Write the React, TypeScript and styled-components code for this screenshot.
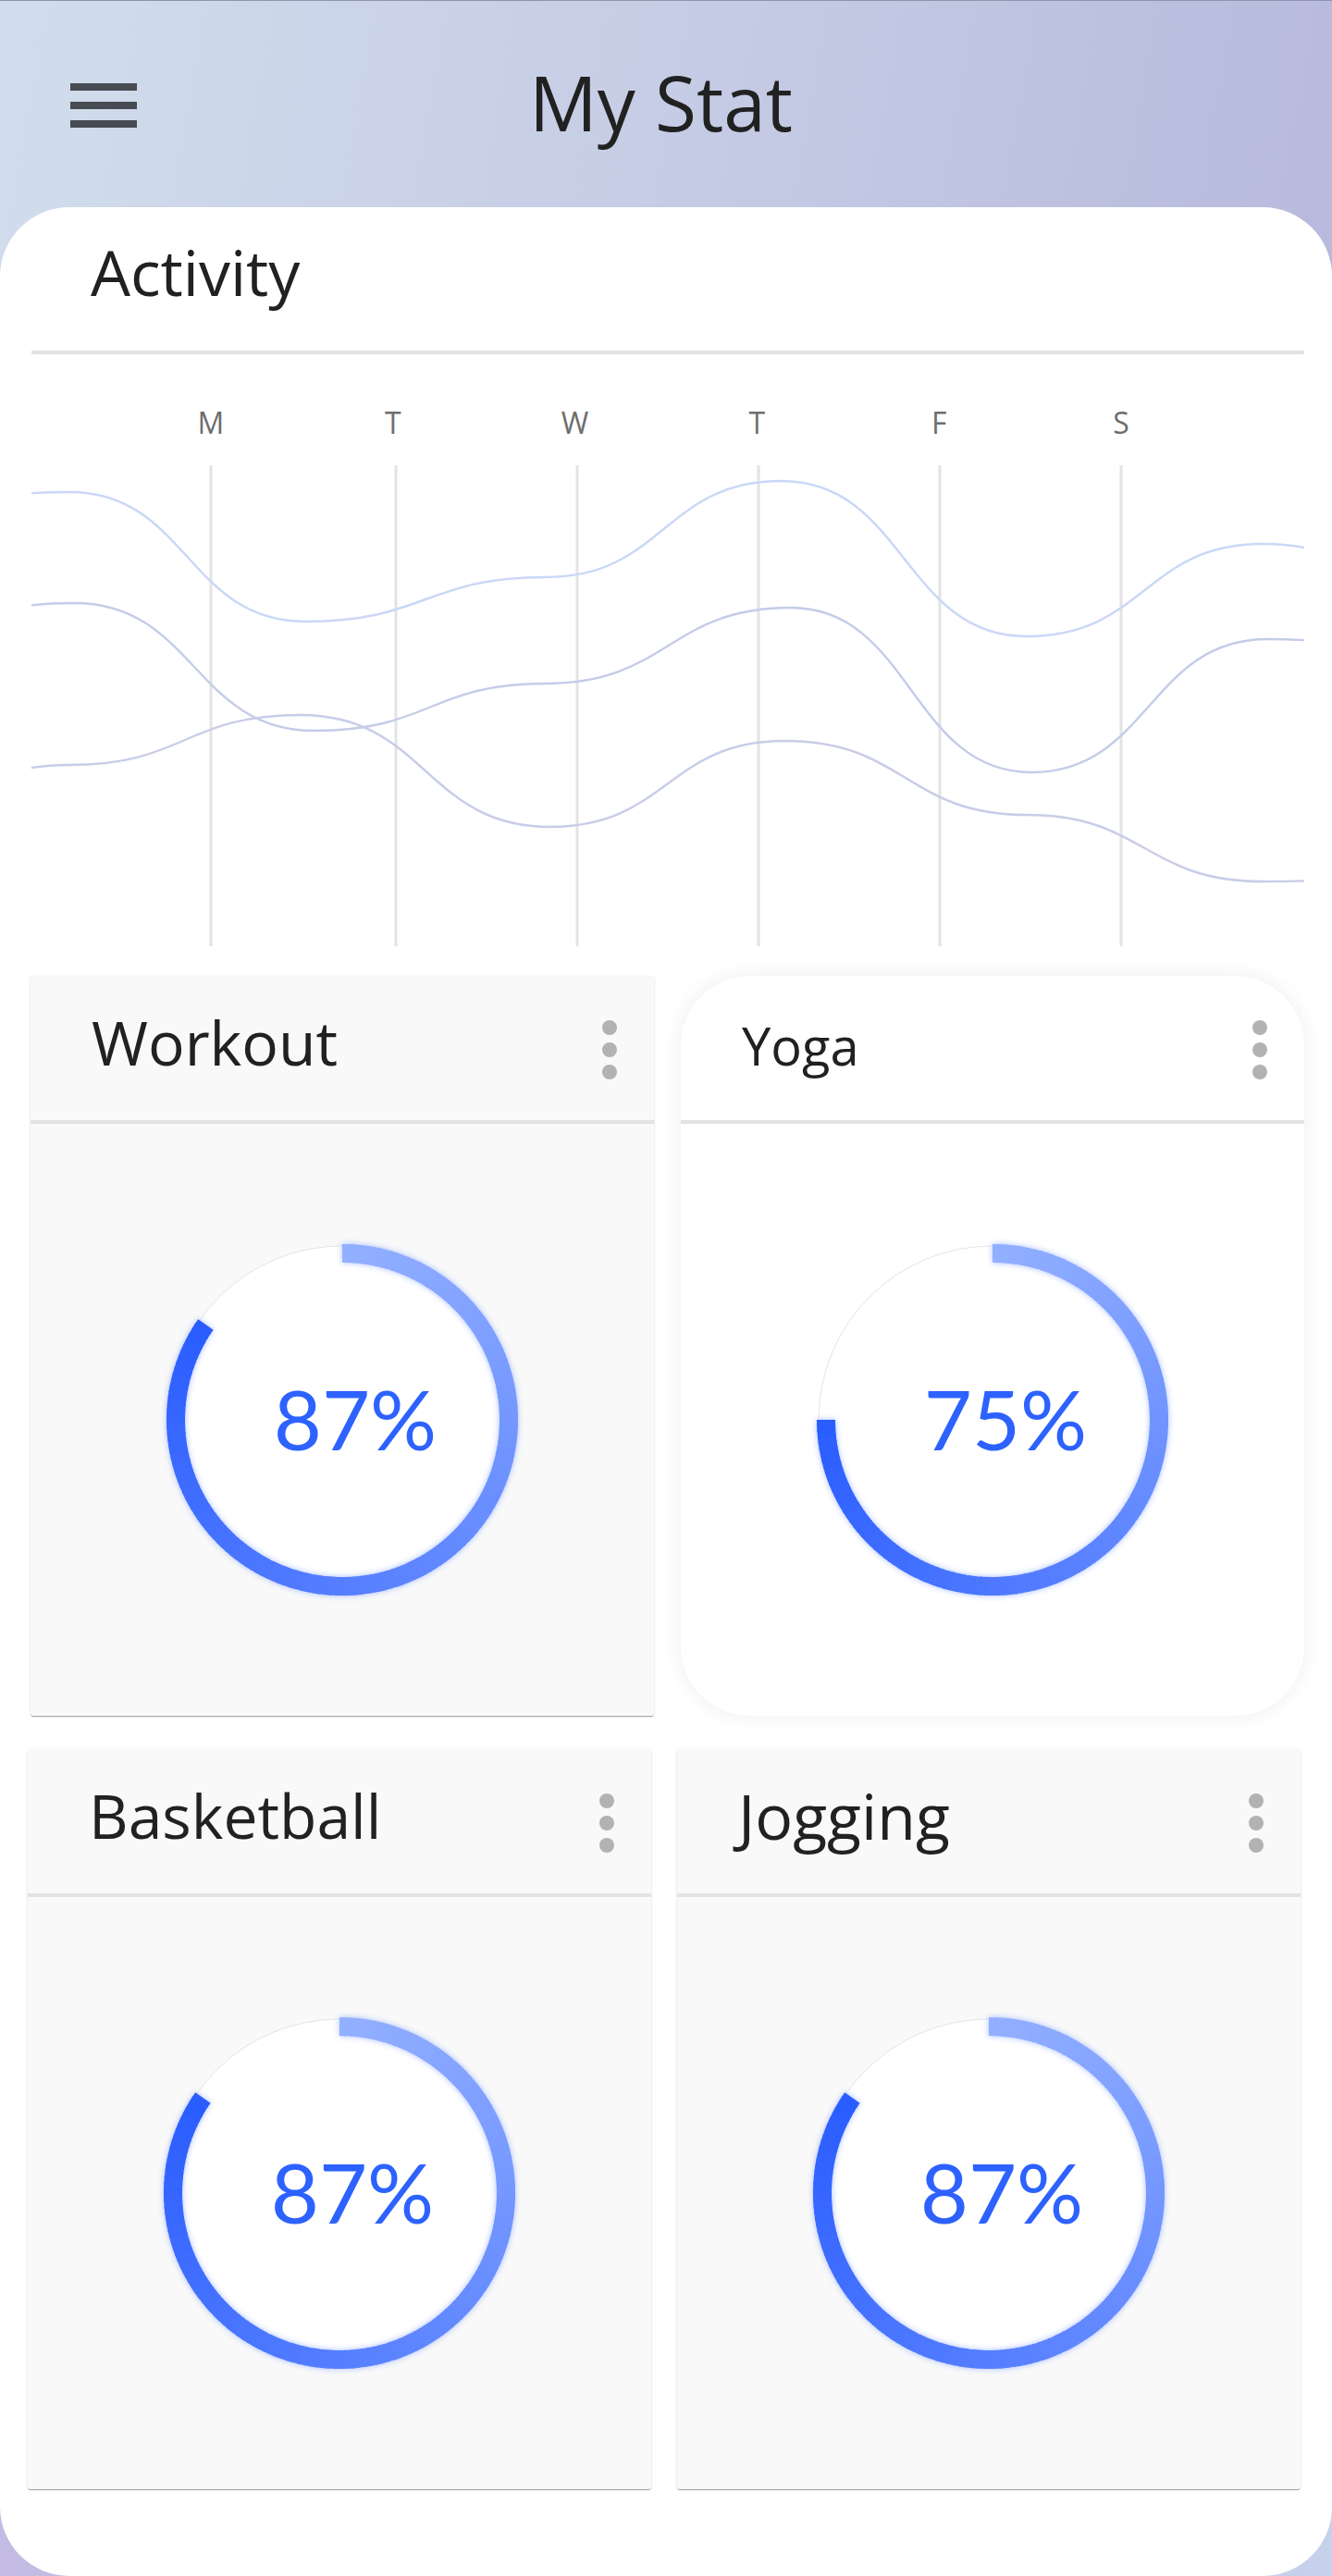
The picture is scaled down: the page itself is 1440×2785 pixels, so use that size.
import React, { useId } from "react";
import styled, { createGlobalStyle } from "styled-components";

const GlobalStyle = createGlobalStyle`
  * { box-sizing: border-box; }
  html, body { margin: 0; padding: 0; }
  html {
    background:
      linear-gradient(100deg, #d1ddec 0%, #c4cae4 50%, #b3b5da 100%) top / 100% 1400px no-repeat,
      linear-gradient(90deg, #c3bbe3 0%, #c6d1eb 100%) bottom / 100% 1385px no-repeat;
  }
  body {
    font-family: "Open Sans", "Noto Sans", sans-serif;
    color: #212121;
  }
`;

const Header = styled.header`
  height: 224px;
  border-top: 1px solid #8e94ac;
  display: grid;
  grid-template-columns: 1fr auto 1fr;
  align-items: center;
  padding-bottom: 6px;
`;

const MenuButton = styled.button`
  justify-self: start;
  margin: 8px 0 0 76px;
  width: 72px;
  height: 48px;
  padding: 0;
  border: 0;
  background: none;
  display: flex;
  flex-direction: column;
  justify-content: space-between;
  cursor: pointer;
`;

const MenuBar = styled.span`
  display: block;
  height: 8px;
  background: #474b52;
`;

const PageTitle = styled.h1`
  margin: 0 11px 0 0;
  font-size: 82px;
  font-weight: 500;
  line-height: normal;
  color: #212121;
`;

const MainCard = styled.main`
  background: #ffffff;
  border-radius: 75px;
  padding-bottom: 94px;
`;

const ActivitySection = styled.section`
  padding: 24px 30px 0 34px;
`;

const SectionTitle = styled.h2`
  margin: 0 0 0 64px;
  font-size: 68px;
  line-height: 92px;
  font-weight: 500;
  color: #212121;
`;

const Divider = styled.hr`
  margin: 39px 0 0;
  border: 0;
  height: 4px;
  background: #e3e3e3;
`;

const DayRow = styled.div`
  display: grid;
  grid-template-columns: repeat(6, 196.8px);
  padding-left: 95.6px;
  margin-top: 52px;
`;

const DayLabel = styled.span`
  text-align: center;
  font-size: 32px;
  line-height: 44px;
  color: #6e6e6e;
`;

const ChartSvg = styled.svg`
  display: block;
  width: 1376px;
  height: 576px;
  overflow: hidden;
`;

const CardGrid = styled.div<{ $inset: string; $gap: number; $top: number }>`
  display: grid;
  grid-template-columns: 1fr 1fr;
  column-gap: ${(p) => p.$gap}px;
  padding: ${(p) => p.$inset};
  margin-top: ${(p) => p.$top}px;
`;

const StatCard = styled.article<{ $variant: "flat" | "round" }>`
  height: 800px;
  display: flex;
  flex-direction: column;
  overflow: hidden;
  background: ${(p) => (p.$variant === "round" ? "#ffffff" : "#f9f9f9")};
  border-radius: ${(p) => (p.$variant === "round" ? "75px" : "3px")};
  box-shadow: ${(p) =>
    p.$variant === "round"
      ? "0 0 22px rgba(0, 0, 0, 0.07)"
      : "0 2px 1px -1px rgba(0,0,0,0.2), 0 1px 1px 0 rgba(0,0,0,0.14), 0 1px 3px 0 rgba(0,0,0,0.12)"};
`;

const CardHeader = styled.div`
  height: 160px;
  flex: none;
  display: flex;
  align-items: center;
  justify-content: space-between;
  padding: 0 40px 0 66px;
  border-bottom: 4px solid #e3e3e3;
`;

const CardTitle = styled.h3<{ $size: number; $lift: number }>`
  margin: 0 0 ${(p) => p.$lift}px;
  font-size: ${(p) => p.$size}px;
  font-weight: 500;
  line-height: normal;
  color: #212121;
`;

const MoreDots = styled.div`
  display: flex;
  flex-direction: column;
  gap: 8px;
  margin-top: 4px;
`;

const Dot = styled.span`
  display: block;
  width: 16px;
  height: 16px;
  border-radius: 50%;
  background: #b2b2b2;
`;

const CardBody = styled.div`
  flex: 1;
  display: grid;
  place-items: center;
`;

const RingWrap = styled.div`
  display: grid;
  width: 400px;
  height: 400px;
  & > * {
    grid-area: 1 / 1;
  }
`;

const RingSvg = styled.svg`
  display: block;
  width: 400px;
  height: 400px;
`;

const Percent = styled.span`
  place-self: center;
  margin: 0 0 5px 28px;
  font-family: Lato, "Open Sans", sans-serif;
  font-size: 90px;
  line-height: 1;
  color: #2d62ff;
`;

type Pt = [number, number];

const smoothPath = (pts: Pt[]) =>
  pts
    .map((p, i) => {
      if (i === 0) return `M${p[0]} ${p[1]}`;
      const [x0, y0] = pts[i - 1];
      const mx = (x0 + p[0]) / 2;
      return `C${mx} ${y0} ${mx} ${p[1]} ${p[0]} ${p[1]}`;
    })
    .join(" ");

const curves: { color: string; pts: Pt[] }[] = [
  {
    color: "#cad7f7",
    pts: [
      [-180, 560],
      [75, 532],
      [330, 672],
      [590, 624],
      [845, 520],
      [1110, 688],
      [1365, 588],
      [1620, 670],
    ],
  },
  {
    color: "#c4cce8",
    pts: [
      [-180, 700],
      [80, 652],
      [340, 790],
      [590, 739],
      [855, 657],
      [1115, 835],
      [1370, 691],
      [1625, 720],
    ],
  },
  {
    color: "#c8cde8",
    pts: [
      [-180, 900],
      [75, 827],
      [325, 773],
      [595, 894],
      [848, 801],
      [1110, 881],
      [1365, 953],
      [1620, 940],
    ],
  },
];

const gridX = [228, 428, 624, 820, 1016, 1212];
const days = ["M", "T", "W", "T", "F", "S"];

function ActivityChart() {
  return (
    <ChartSvg viewBox="0 0 1376 576">
      <g transform="translate(-34 -479)">
        {gridX.map((x) => (
          <line key={x} x1={x} x2={x} y1={503} y2={1023} stroke="#e3e3e3" strokeWidth={3} />
        ))}
        {curves.map((c, i) => (
          <path key={i} d={smoothPath(c.pts)} fill="none" stroke={c.color} strokeWidth={2.4} />
        ))}
      </g>
    </ChartSvg>
  );
}

const START = [147, 176, 255];
const END = [42, 92, 255];

function Ring({ fraction }: { fraction: number }) {
  const id = useId().replace(/:/g, "");
  const cx = 200;
  const cy = 200;
  const r = 180;
  const sweep = fraction * 360;
  const n = Math.ceil(sweep / 2);
  const pt = (deg: number) => {
    const a = (deg * Math.PI) / 180;
    return `${(cx + r * Math.sin(a)).toFixed(2)} ${(cy - r * Math.cos(a)).toFixed(2)}`;
  };
  const segs = [];
  for (let i = 0; i < n; i++) {
    const a0 = (i * sweep) / n;
    const a1 = Math.min(sweep, ((i + 1) * sweep) / n + 0.5);
    const t = (i + 0.5) / n;
    const c = START.map((s, k) => Math.round(s + (END[k] - s) * t));
    segs.push(
      <path
        key={i}
        d={`M${pt(a0)} A${r} ${r} 0 0 1 ${pt(a1)}`}
        fill="none"
        stroke={`rgb(${c[0]},${c[1]},${c[2]})`}
        strokeWidth={20}
      />
    );
  }
  return (
    <RingSvg viewBox="0 0 400 400">
      <defs>
        <filter id={`glow${id}`} x="-20%" y="-20%" width="140%" height="140%">
          <feDropShadow dx="0" dy="0" stdDeviation="3" floodColor="#3a6bff" floodOpacity="0.45" />
        </filter>
      </defs>
      <circle cx={cx} cy={cy} r={188} fill="#ffffff" stroke="#e4e4e4" strokeWidth={1} />
      <g filter={`url(#glow${id})`}>{segs}</g>
    </RingSvg>
  );
}

type CardData = {
  title: string;
  size: number;
  lift: number;
  variant: "flat" | "round";
  label: string;
  fraction: number;
};

const rows: CardData[][] = [
  [
    { title: "Workout", size: 66, lift: 14, variant: "flat", label: "87%", fraction: 0.847 },
    { title: "Yoga", size: 56, lift: 7, variant: "round", label: "75%", fraction: 0.75 },
  ],
  [
    { title: "Basketball", size: 66, lift: 14, variant: "flat", label: "87%", fraction: 0.847 },
    { title: "Jogging", size: 68, lift: 14, variant: "flat", label: "87%", fraction: 0.847 },
  ],
];

const rowLayout = [
  { inset: "0 30px 0 33px", gap: 29, top: 0 },
  { inset: "0 34px 0 30px", gap: 28, top: 36 },
];

function Stat({ data }: { data: CardData }) {
  return (
    <StatCard $variant={data.variant}>
      <CardHeader>
        <CardTitle $size={data.size} $lift={data.lift}>
          {data.title}
        </CardTitle>
        <MoreDots>
          <Dot />
          <Dot />
          <Dot />
        </MoreDots>
      </CardHeader>
      <CardBody>
        <RingWrap>
          <Ring fraction={data.fraction} />
          <Percent>{data.label}</Percent>
        </RingWrap>
      </CardBody>
    </StatCard>
  );
}

export default function App() {
  return (
    <>
      <GlobalStyle />
      <Header>
        <MenuButton aria-label="menu">
          <MenuBar />
          <MenuBar />
          <MenuBar />
        </MenuButton>
        <PageTitle>My Stat</PageTitle>
        <span />
      </Header>
      <MainCard>
        <ActivitySection>
          <SectionTitle>Activity</SectionTitle>
          <Divider />
          <DayRow>
            {days.map((d, i) => (
              <DayLabel key={i}>{d}</DayLabel>
            ))}
          </DayRow>
          <ActivityChart />
        </ActivitySection>
        {rows.map((row, i) => (
          <CardGrid key={i} $inset={rowLayout[i].inset} $gap={rowLayout[i].gap} $top={rowLayout[i].top}>
            {row.map((c) => (
              <Stat key={c.title} data={c} />
            ))}
          </CardGrid>
        ))}
      </MainCard>
    </>
  );
}
